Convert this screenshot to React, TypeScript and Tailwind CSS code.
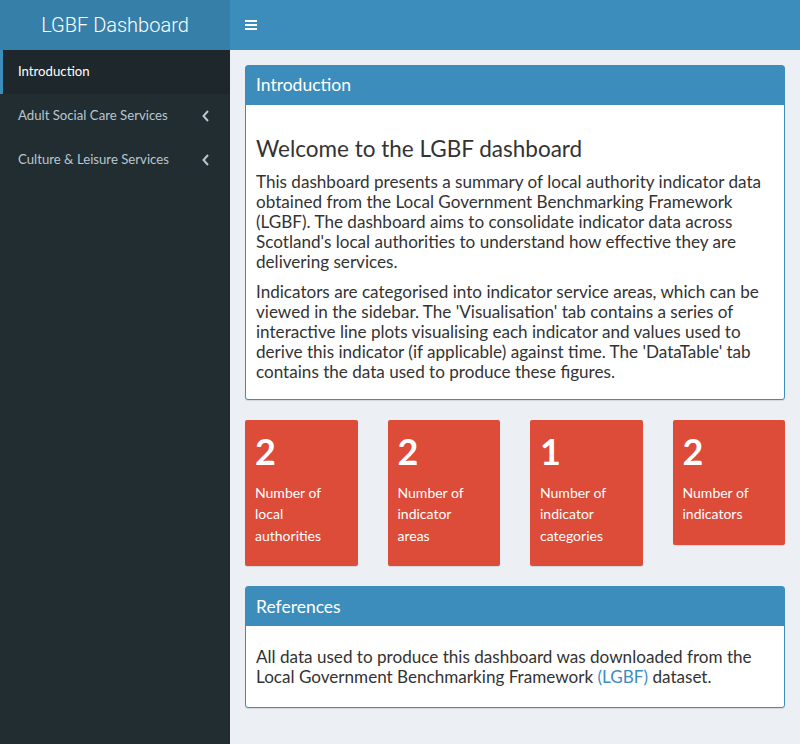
import { ReactNode } from 'react'

const SIDEBAR_ITEMS = [
  { label: 'Introduction', active: true },
  { label: 'Adult Social Care Services', active: false },
  { label: 'Culture & Leisure Services', active: false }
]

const STATS = [
  { value: '2', label: 'Number of local authorities' },
  { value: '2', label: 'Number of indicator areas' },
  { value: '1', label: 'Number of indicator categories' },
  { value: '2', label: 'Number of indicators' }
]

/* --- Box --- */
const Box = ({ title, children }: { title: string; children: ReactNode }) => (
  <div className="mb-5 rounded-[3px] border border-[#3c8dbc] bg-white shadow-[0_1px_1px_rgba(0,0,0,0.1)]">
    <div className="flex h-[39px] items-center bg-[#3c8dbc] px-[10px] text-[17.5px] text-white">
      {title}
    </div>
    {children}
  </div>
)

const Chevron = () => (
  <svg width="10" height="14" viewBox="0 0 10 14" className="ml-auto mr-[19px]">
    <polyline
      points="7,2 2.5,7 7,12"
      fill="none"
      stroke="#b8c7ce"
      strokeWidth="2"
    />
  </svg>
)

export default function App() {
  return (
    <div className="flex min-h-[744px] font-['Lato','Open_Sans',sans-serif] text-[#333]">
      <aside className="w-[230px] shrink-0 bg-[#222d32]">
        <div className="flex h-[50px] items-center justify-center bg-[#367fa9] font-['Roboto',sans-serif] text-[20px] font-light text-white">
          LGBF Dashboard
        </div>
        <ul>
          {SIDEBAR_ITEMS.map((item) => (
            <li
              key={item.label}
              className={
                item.active
                  ? 'flex h-[44px] items-center border-l-[3px] border-[#3c8dbc] bg-[#1e282c] pl-[15px] text-[13.2px] text-white'
                  : 'flex h-[44px] items-center border-l-[3px] border-transparent pl-[15px] text-[13.2px] text-[#b8c7ce]'
              }
            >
              {item.label}
              {!item.active && <Chevron />}
            </li>
          ))}
        </ul>
      </aside>

      <div className="flex flex-1 flex-col bg-[#ecf0f5]">
        <header className="flex h-[50px] items-center bg-[#3c8dbc] pl-[15px]">
          <svg width="12" height="12" viewBox="0 0 12 12">
            <rect x="0" y="1" width="12" height="2" fill="white" />
            <rect x="0" y="5" width="12" height="2" fill="white" />
            <rect x="0" y="9" width="12" height="2" fill="white" />
          </svg>
        </header>

        <main className="px-[15px] pt-[15px]">
          <Box title="Introduction">
            <div className="px-[10px] pb-[7px] pt-[10px] text-[17.1px] leading-[20px]">
              <h2 className="mb-[10px] mt-5 text-[22.5px] leading-[27px]">
                Welcome to the LGBF dashboard
              </h2>
              <p className="mb-[10px]">
                This dashboard presents a summary of local authority indicator
                data obtained from the Local Government Benchmarking Framework
                (LGBF). The dashboard aims to consolidate indicator data across
                Scotland's local authorities to understand how effective they are
                delivering services.
              </p>
              <p className="mb-[10px]">
                Indicators are categorised into indicator service areas, which can
                be viewed in the sidebar. The 'Visualisation' tab contains a
                series of interactive line plots visualising each indicator and
                values used to derive this indicator (if applicable) against time.
                The 'DataTable' tab contains the data used to produce these
                figures.
              </p>
            </div>
          </Box>

          <div className="grid grid-cols-4 items-start gap-[30px]">
            {STATS.map((stat, i) => (
              <div
                key={i}
                className="mb-5 rounded-[2px] bg-[#dd4b39] p-[10px] text-white shadow-[0_1px_1px_rgba(0,0,0,0.1)]"
              >
                <h3 className="mb-[10px] text-[36px] font-bold leading-[42px]">
                  {stat.value}
                </h3>
                <p className="mb-[10px] pr-[8px] text-[14px] leading-[21.4px]">
                  {stat.label}
                </p>
              </div>
            ))}
          </div>

          <Box title="References">
            <div className="px-[10px] pb-5 pt-[21px] text-[17.1px] leading-[20px]">
              <p>
                All data used to produce this dashboard was downloaded from the
                Local Government Benchmarking Framework{' '}
                <span className="text-[#3c8dbc]">(LGBF)</span> dataset.
              </p>
            </div>
          </Box>
        </main>
      </div>
    </div>
  )
}
